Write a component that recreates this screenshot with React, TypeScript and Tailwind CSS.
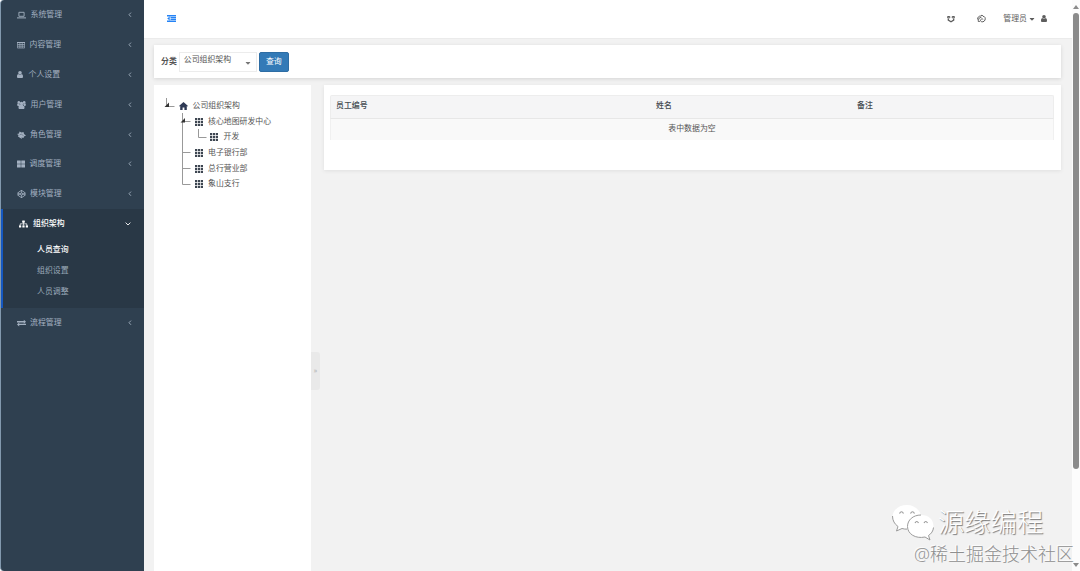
import React from 'react';
import { FaCaretDown, FaCodepen, FaSitemap, FaThLarge } from 'react-icons/fa';

function LaptopIcon() {
  return (
    <svg viewBox="0 0 9 8" className="h-[8px] w-[9px]" fill="none" stroke="currentColor">
      <path d="M1.900 1.300h5.200v4H1.900z" strokeWidth="0.9" />
      <path d="M0 6.900h9" strokeWidth="1" />
    </svg>
  );
}

function TableIcon() {
  return (
    <svg viewBox="0 0 8 8" className="h-[8px] w-[8px]" fill="none" stroke="currentColor">
      <path d="M.4 1.500h7.200v5.500H.4zM.4 3.500h7.200M.4 5.200h7.200M2.900 1v6M5.200 1v6" strokeWidth="0.7" />
      <path d="M0 1.500h8" strokeWidth="1" />
    </svg>
  );
}

function UserIcon({ className = '' }: { className?: string }) {
  return (
    <svg viewBox="0 0 6 7" className={`h-[7px] w-[6px] ${className}`} fill="currentColor">
      <circle cx="3" cy="1.800" r="1.800" />
      <path d="M1.200 3C.3 3.300 0 4.500 0 5.700 0 6.600.5 7 1.200 7h3.600C5.500 7 6 6.600 6 5.700 6 4.500 5.700 3.300 4.800 3 4 4 2 4 1.200 3Z" />
    </svg>
  );
}

function UsersIcon() {
  return (
    <svg viewBox="0 0 18 16" className="h-[8px] w-[9px]" fill="currentColor">
      <circle cx="3.600" cy="2.800" r="2.600" />
      <circle cx="14.400" cy="2.800" r="2.600" />
      <circle cx="9" cy="5.200" r="3.500" />
      <path d="M1 5h4l1 5H2C0 10 0 6 1 5ZM17 5h-4l-1 5h4c2 0 2-4 1-5ZM5.500 8h7c2 1 2.500 3 2.500 5.500 0 1.500-1 2.500-2.500 2.500h-7C4 16 3 15 3 13.500 3 11 3.500 9 5.500 8Z" />
    </svg>
  );
}

function RoleIcon() {
  return (
    <svg viewBox="0 0 18 16" className="h-[8px] w-[9px]" fill="currentColor">
      <path d="M0 6 4 5 5 1l4 2 4-1 1 4 4 3-4 2-1 3-4-1 1 3-5-3-3-2 1-3Z" />
      <path d="m5 8 4-2 4 4" fill="none" stroke="#2f4050" strokeWidth="0.8" />
    </svg>
  );
}

function ExchangeIcon() {
  return (
    <svg viewBox="0 0 9 8" className="h-[8px] w-[9px]" fill="currentColor">
      <path d="M0 2h6.800V.7L9 2.700l-2.200 2V3.400H0zM9 6.100H2.200v1.300L0 5.500l2.200-1.900v1.200H9z" />
    </svg>
  );
}

function HomeIcon() {
  return (
    <svg viewBox="0 0 9 8" className="h-[8px] w-[9px]" fill="#2f3a55">
      <path d="M4.500 0 9 4l-.6.600-.6-.5V8H5.400V5.400H3.600V8H1.200V4.100l-.6.500L0 4z" />
    </svg>
  );
}

function BuffIcon() {
  return (
    <svg viewBox="0 0 8 8" className="h-[8px] w-[8px]" fill="none" stroke="currentColor">
      <path d="M.6 1.500h2.200v1.300H.6zM5.200 1.500h2.200v1.300H5.200z" strokeWidth="1" />
      <path d="M1.300 3.500v1.600L4 6.700l2.700-1.600V3.500" strokeWidth="1.300" />
    </svg>
  );
}

function ShellIcon() {
  return (
    <svg viewBox="0 0 9 9" className="h-[9px] w-[9px]" fill="none" stroke="currentColor">
      <path d="M.6 5.500C.5 3 2 2 3.800 2L5 1l1 1.300c2 0 2.700 2 2 3.700C7 8.500 3.700 8.300 3.500 6.500c0-1.500 1.700-2 2.700-1.200" strokeWidth="1" />
      <path d="M1 7.200 2.200 4l2.300-.8M1 7.400h2" strokeWidth="0.9" />
    </svg>
  );
}

function OutdentIcon() {
  return (
    <svg viewBox="0 0 9 7" className="h-[7px] w-[9px]" fill="#2583f5">
      <path d="M0 0h9v1.400H0zM3.500 1.900H9v1.300H3.500zM3.500 3.800H9v1.300H3.500zM0 5.600h9V7H0zM2.700 1.600v3.800L.2 3.500z" />
    </svg>
  );
}

function Chevron({ open = false }: { open?: boolean }) {
  return (
    <svg viewBox="0 0 6 6" className="h-[6px] w-[6px]" fill="none" stroke="currentColor" strokeWidth="0.9">
      <path d={open ? 'M.6 1.600 3 4l2.400-2.400' : 'M4 .6 2 2.700l2 2.100'} />
    </svg>
  );
}

function GridIcon() {
  return (
    <svg viewBox="0 0 8 8" className="h-[8px] w-[8px] shrink-0" fill="#3d4651">
      <path d="M0 0h2.200v2.200H0zM2.900 0h2.200v2.200H2.900zM5.800 0H8v2.200H5.800zM0 2.900h2.200v2.200H0zM2.900 2.900h2.200v2.200H2.900zM5.800 2.900H8v2.200H5.800zM0 5.800h2.200V8H0zM2.900 5.800h2.200V8H2.900zM5.800 5.800H8V8H5.800z" />
    </svg>
  );
}

function MenuItem({ icon, label, gap = 'gap-[5px]' }: { icon: React.ReactNode; label: string; gap?: string }) {
  return (
    <div className="flex h-[29.9px] items-center pr-[11px] pl-[15.5px] text-[#a3b0c0]">
      <div className={`flex flex-1 items-center ${gap}`}>
        {icon}
        <span>{label}</span>
      </div>
      <Chevron />
    </div>
  );
}

function Sidebar() {
  return (
    <aside className="flex w-[144px] shrink-0 flex-col overflow-hidden rounded-l-[4px] border-l border-[#8299ae] bg-[#2f4050] text-[7.9px] leading-none">
      <MenuItem icon={<LaptopIcon />} label="系统管理" />
      <MenuItem icon={<TableIcon />} label="内容管理" />
      <MenuItem icon={<UserIcon />} label="个人设置" gap="gap-[6px]" />
      <MenuItem icon={<UsersIcon />} label="用户管理" />
      <MenuItem icon={<RoleIcon />} label="角色管理" gap="gap-[4.5px]" />
      <MenuItem icon={<FaThLarge className="h-[8px] w-[8px]" />} label="调度管理" />
      <MenuItem icon={<FaCodepen className="h-[8px] w-[9px]" />} label="模块管理" gap="gap-[4.5px]" />

      <div className="-ml-px h-[99px] border-l-[3px] border-[#1558c0] bg-[#293846] text-[#9ba9b8]">
        <div className="flex h-[30px] items-center pr-[13px] pl-[16px] text-white">
          <div className="flex flex-1 items-center gap-[5px]">
            <FaSitemap className="h-[8px] w-[9px]" />
            <span className="font-medium">组织架构</span>
          </div>
          <Chevron open />
        </div>
        <div className="flex flex-col pl-[34px] leading-[21px]">
          <span className="font-medium text-white">人员查询</span>
          <span>组织设置</span>
          <span>人员调整</span>
        </div>
      </div>
      <MenuItem icon={<ExchangeIcon />} label="流程管理" gap="gap-[4.5px]" />
    </aside>
  );
}

function Header() {
  return (
    <header className="flex h-[39px] shrink-0 items-center border-b border-[#ebebeb] bg-white pr-[25px] pb-px pl-[22.5px] text-[#5d5d5d]">
      <div className="flex-1">
        <OutdentIcon />
      </div>
      <BuffIcon />
      <span className="ml-[22px]">
        <ShellIcon />
      </span>
      <span className="ml-[17px]">管理员</span>
      <FaCaretDown className="ml-[2px] h-[8px] w-[6px]" />
      <UserIcon className="ml-[6px]" />
    </header>
  );
}

function FilterBar() {
  return (
    <div className="flex h-[33px] shrink-0 items-center bg-white pl-[7px] shadow-[0_1px_4px_rgba(0,0,0,0.12)]">
      <span className="font-bold text-[#555]">分类</span>
      <div className="ml-[2px] flex h-[20px] w-[78px] items-center border border-[#ececec] pr-[5px] pl-[4px]">
        <span className="flex-1 pb-[3px]">公司组织架构</span>
        <FaCaretDown className="mt-[3px] h-[8px] w-[6px] text-[#777]" />
      </div>
      <button className="ml-[2px] h-[20px] w-[30px] rounded-[2px] border border-[#2e6da4] bg-[#337ab7] text-white">
        查询
      </button>
    </div>
  );
}

function Tree() {
  return (
    <div className="relative w-[157px] shrink-0 bg-white pt-[13px] leading-none">
      {/* connector lines behind the rows */}
      <svg className="absolute top-0 left-0 h-[110px] w-[60px]" fill="none" stroke="#999" strokeWidth="1">
        <path d="M12.5 13v8M12.5 21.500h8M28.500 28v71.500h8M28.500 36.500h8M28.500 67.500h8M28.500 83.500h8M44.500 44v8.500h8" />
        <path d="m10.500 22 4.500-4.500V22zM26.500 37.500 31 33v4.500z" fill="#333" stroke="none" />
      </svg>
      <div className="flex h-[15.7px] items-center gap-[4.5px] pl-[25px]">
        <HomeIcon />
        公司组织架构
      </div>
      <div className="flex h-[15.7px] items-center gap-[5px] pl-[41px]">
        <GridIcon />
        核心地图研发中心
      </div>
      <div className="flex h-[15.7px] items-center gap-[5.5px] pl-[56px]">
        <GridIcon />
        开发
      </div>
      {['电子银行部', '总行营业部', '象山支行'].map((name) => (
        <div key={name} className="flex h-[15.7px] items-center gap-[5px] pl-[41px]">
          <GridIcon />
          {name}
        </div>
      ))}
    </div>
  );
}

function StaffTable() {
  return (
    <div className="h-[85px] flex-1 bg-white pt-[10px] pr-[7px] pl-[6px] shadow-[0_1px_4px_rgba(0,0,0,0.08)]">
      <div className="flex h-[23.5px] items-center rounded-t-[2px] border border-[#ededed] border-b-[#e7e7e7] bg-[#f5f5f6] pb-px pl-[5px] font-medium text-[#42494f]">
        <span className="w-[320px]">员工编号</span>
        <span className="w-[201px]">姓名</span>
        <span>备注</span>
      </div>
      <div className="flex h-[21px] items-center justify-center border-x border-[#f0f0f0] bg-[#f9f9f9]">
        表中数据为空
      </div>
    </div>
  );
}

function Scrollbar() {
  return (
    <div className="flex w-[8px] shrink-0 flex-col items-center bg-[#fcfcfc] pt-[5px] pb-[4px]">
      <div className="h-0 w-0 border-x-[3px] border-b-[4px] border-x-transparent border-b-[#8b8b8b]" />
      <div className="mt-[4px] h-[456px] w-[6px] rounded-full bg-[#8b8b8b]" />
      <div className="mt-auto h-0 w-0 border-x-[3px] border-t-[4px] border-x-transparent border-t-[#8b8b8b]" />
    </div>
  );
}

function Watermark() {
  return (
    <>
      <div className="absolute top-[503px] left-[891px] flex items-center">
        <svg viewBox="0 0 44 38" className="h-[38px] w-[44px]" fill="#fff">
          <path d="M16 2C7.500 2 1.500 7.500 1.500 14c0 4 2 7.300 5.500 9.500L5.500 28l5.500-2.500c2 .6 4 .8 6 .5C25 26 30 20 30 14S24 2 16 2Z" />
          <path d="M1.500 13c0 4.500 2 8 5.500 10.500L5.500 28l5.500-2.500c2 .6 3.500.7 5 .6" fill="none" stroke="#9b9b9b" />
          <path d="M30 12c-8 0-13.500 4.500-13.500 11.500S22 34.500 30 34.500l4-.5 5 3-1.500-4.500c3-2 5-5 5-9C42.500 16.500 38 12 30 12Z" />
          <path d="M30 12c-8 0-13.500 5-13.500 11.500 0 7.500 8 12.500 17.500 10.500l5 3-1.500-4.500c3-2 4.700-4.500 5-8" fill="none" stroke="#9b9b9b" />
          <path d="M8.500 10.500q2-3.500 4 0M19.500 10.500q2-3.500 4 0M24 20q1.800-3 3.500 0M33 20q1.800-3 3.500 0" fill="none" stroke="#999" strokeWidth="1.200" />
        </svg>
        <span className="ml-[3px] text-[26.3px] leading-[38px] font-light text-white [text-shadow:1px_1px_1px_#777]">
          源缘编程
        </span>
      </div>
      <div className="absolute top-[542px] left-[914px] text-[18px] leading-[24px] font-light whitespace-nowrap text-[#8f8f8f] [text-shadow:-1px_-1px_1px_#fff]">
        @稀土掘金技术社区
      </div>
    </>
  );
}

export default function App() {
  return (
    <div className="relative flex h-[571px] w-[1080px] overflow-hidden bg-white font-['Open_Sans','Noto_Sans_CJK_SC',sans-serif] text-[7.9px] leading-none text-[#555]">
      <Sidebar />
      <div className="flex min-w-0 flex-1 flex-col bg-[#f2f2f2]">
        <Header />
        <main className="flex flex-1 flex-col gap-[7px] pt-[6px] pr-[11px] pl-[10px]">
          <FilterBar />
          <div className="flex flex-1">
            <Tree />
            <div className="mt-[267px] mr-[4px] flex h-[38px] w-[9px] shrink-0 items-center justify-center rounded-r-[3px] bg-[#e9e9e9] pb-[2px] text-[7px] text-[#aaa]">
              »
            </div>
            <StaffTable />
          </div>
        </main>
      </div>
      <Scrollbar />
      <Watermark />
    </div>
  );
}
